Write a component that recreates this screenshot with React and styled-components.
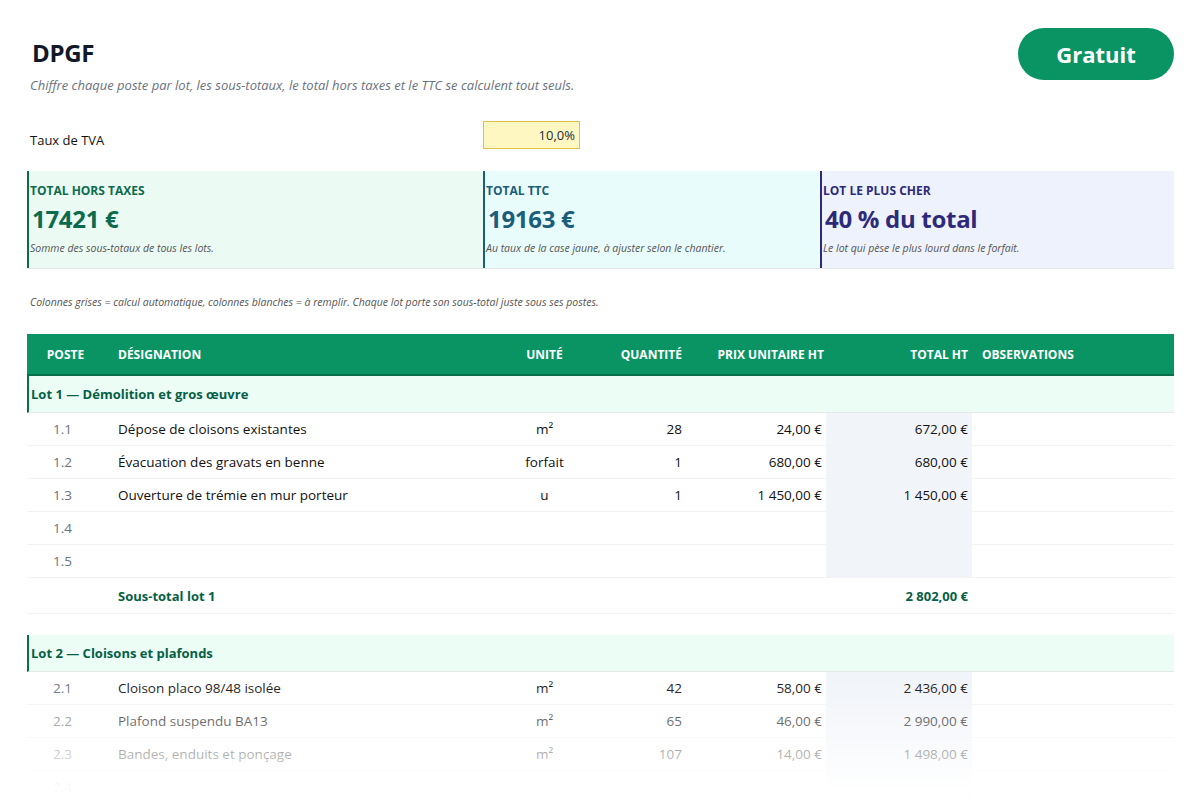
import React from "react";
import styled, { createGlobalStyle } from "styled-components";

const G = createGlobalStyle`
  html,body{margin:0;padding:0;background:#fff;}
  body{font-family:"Open Sans","Liberation Sans",sans-serif;color:#1f2937;overflow:hidden;}
`;
const Page = styled.div`position:relative;width:1200px;height:800px;overflow:hidden;padding:0 26px 0 27px;box-sizing:border-box;`;
const Top = styled.div`display:flex;justify-content:space-between;align-items:flex-start;padding-top:28px;`;
const Title = styled.h1`margin:8px 0 0 5px;font-size:24px;font-weight:700;color:#111827;letter-spacing:-0.3px;`;
const Badge = styled.div`width:156px;height:52px;border-radius:26px;background:#0a9463;color:#fff;font-size:22px;font-weight:700;display:flex;align-items:center;justify-content:center;`;
const Sub = styled.p`margin:-4px 0 0 3px;font-size:13px;font-style:italic;color:#6b7280;`;
const TvaRow = styled.div`display:grid;grid-template-columns:456px 97px;align-items:center;margin-top:26px;height:30px;`;
const Label = styled.span`font-size:13px;color:#111;padding-left:3px;padding-top:10px;`;
const Yellow = styled.div`height:28px;background:#fff7c2;border:1px solid #e0c04a;box-sizing:border-box;text-align:right;padding:4px 4px 0 0;font-size:13px;`;
const Cards = styled.div`display:grid;grid-template-columns:456px 337px 1fr;margin-top:21px;height:97px;border-bottom:1px solid #e5e7eb;`;
const Card = styled.div`background:${p=>p.bg};border-left:2px solid ${p=>p.c};padding:11px 0 0 1px;color:${p=>p.c};`;
const CardLabel = styled.div`font-size:12px;font-weight:700;`;
const CardVal = styled.div`font-size:24px;font-weight:700;margin:3px 0 0 2px;letter-spacing:-0.3px;`;
const CardNote = styled.div`font-size:10.5px;font-style:italic;color:#555;margin-top:6px;`;
const Note = styled.p`margin:26px 0 0 3px;font-size:10.5px;font-style:italic;color:#555;`;
const Table = styled.div`margin-top:25px;`;
const cols = "81px 360px 128px 94px 136px 146px 1fr";
const Head = styled.div`display:grid;grid-template-columns:${cols};height:40px;align-items:center;background:#0a9463;border-bottom:2px solid #06704a;color:#fff;font-size:12px;font-weight:700;`;
const Cell = styled.div`text-align:${p=>p.a||"left"};padding:${p=>p.pad||"0"};`;
const Lot = styled.div`height:36px;background:#ecfdf5;border-left:2px solid #06704a;display:flex;align-items:center;padding-left:2px;font-size:13px;font-weight:700;color:#065f46;border-bottom:1px solid #e5e7eb;`;
const Row = styled.div`display:grid;grid-template-columns:${cols};height:32px;align-items:stretch;font-size:13.5px;color:${p=>p.col||"#111"};border-bottom:1px solid #f1f3f5;`;
const C = styled.div`display:flex;align-items:center;justify-content:${p=>p.a==="right"?"flex-end":p.a==="center"?"center":"flex-start"};padding:${p=>p.pad||"0"};background:${p=>p.bg||"transparent"};color:${p=>p.dim?"#6b7280":"inherit"};`;
const Sub2 = styled(Row)`height:35px;font-weight:700;color:#065f46;font-size:13px;`;
const Gap = styled.div`height:21px;`;
const Fade = styled.div`position:absolute;left:0;right:0;bottom:0;height:120px;background:linear-gradient(rgba(255,255,255,0),rgba(255,255,255,0.97) 90%);pointer-events:none;`;

const R = ({p,d="",u="",q="",pu="",t="",col}) => (
  <Row col={col}>
    <C a="center" dim pad="0 10px 0 0">{p}</C>
    <C pad="0 0 0 10px">{d}</C>
    <C a="center" pad="0 0 0 25px">{u}</C>
    <C a="right" pad="0 8px 0 0">{q}</C>
    <C a="right" pad="0 4px 0 0">{pu}</C>
    <C a="right" bg="#f1f4f9" pad="0 4px 0 0">{t}</C>
    <C />
  </Row>
);

export default function App(){
  return (<Page><G/>
    <Top><Title>DPGF</Title><Badge>Gratuit</Badge></Top>
    <Sub>Chiffre chaque poste par lot, les sous-totaux, le total hors taxes et le TTC se calculent tout seuls.</Sub>
    <TvaRow><Label>Taux de TVA</Label><Yellow>10,0%</Yellow></TvaRow>
    <Cards>
      <Card bg="#ebfbf4" c="#0d6b4d"><CardLabel>TOTAL HORS TAXES</CardLabel><CardVal>17421 €</CardVal><CardNote>Somme des sous-totaux de tous les lots.</CardNote></Card>
      <Card bg="#e9fcfc" c="#1b5e7a"><CardLabel>TOTAL TTC</CardLabel><CardVal>19163 €</CardVal><CardNote>Au taux de la case jaune, à ajuster selon le chantier.</CardNote></Card>
      <Card bg="#eef2fd" c="#2e2a7a"><CardLabel>LOT LE PLUS CHER</CardLabel><CardVal>40 % du total</CardVal><CardNote>Le lot qui pèse le plus lourd dans le forfait.</CardNote></Card>
    </Cards>
    <Note>Colonnes grises = calcul automatique, colonnes blanches = à remplir. Chaque lot porte son sous-total juste sous ses postes.</Note>
    <Table>
      <Head><Cell a="center" pad="0 4px 0 0">POSTE</Cell><Cell pad="0 0 0 10px">DÉSIGNATION</Cell><Cell a="center" pad="0 0 0 25px">UNITÉ</Cell><Cell a="right" pad="0 8px 0 0">QUANTITÉ</Cell><Cell a="right" pad="0 2px 0 0">PRIX UNITAIRE HT</Cell><Cell a="right" pad="0 4px 0 0">TOTAL HT</Cell><Cell pad="0 0 0 10px">OBSERVATIONS</Cell></Head>
      <Lot>Lot 1 — Démolition et gros œuvre</Lot>
      <R p="1.1" d="Dépose de cloisons existantes" u="m²" q="28" pu="24,00 €" t="672,00 €"/>
      <R p="1.2" d="Évacuation des gravats en benne" u="forfait" q="1" pu="680,00 €" t="680,00 €"/>
      <R p="1.3" d="Ouverture de trémie en mur porteur" u="u" q="1" pu="1 450,00 €" t="1 450,00 €"/>
      <R p="1.4"/>
      <R p="1.5"/>
      <Sub2><C/><C pad="0 0 0 10px">Sous-total lot 1</C><C/><C/><C/><C a="right" pad="0 4px 0 0">2 802,00 €</C><C/></Sub2>
      <Gap/>
      <Lot>Lot 2 — Cloisons et plafonds</Lot>
      <R p="2.1" d="Cloison placo 98/48 isolée" u="m²" q="42" pu="58,00 €" t="2 436,00 €"/>
      <R p="2.2" d="Plafond suspendu BA13" u="m²" q="65" pu="46,00 €" t="2 990,00 €"/>
      <R p="2.3" d="Bandes, enduits et ponçage" u="m²" q="107" pu="14,00 €" t="1 498,00 €"/>
      <R p="2.4"/>
    </Table>
    <Fade/>
  </Page>);
}
